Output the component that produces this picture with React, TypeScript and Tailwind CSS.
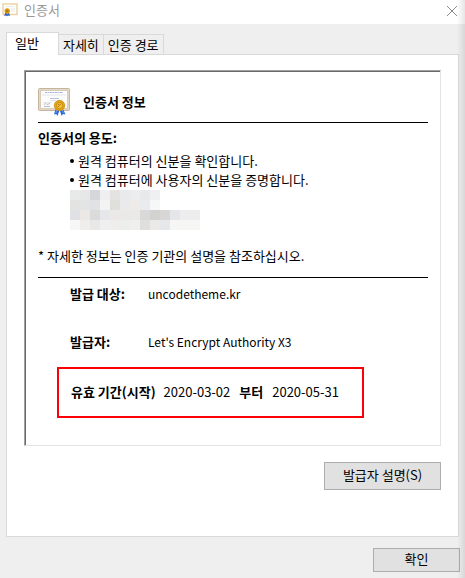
import React, { useState } from 'react';

const tabs = ['일반', '자세히', '인증 경로'];

const purposes = [
  '원격 컴퓨터의 신분을 확인합니다.',
  '원격 컴퓨터에 사용자의 신분을 증명합니다.',
];

// Colours of the pixelated block, one row per line
const mosaic = [
  ['#e8eaea', '#e7e7e7', '#d6d7da', '#efefef', '#e4e3e1', '#e9eaec', '#ededed', '#e8e9eb', '#f0f0f0'],
  ['#e3e3e1', '#e4e4e5', '#e0e2e5', '#f3f3f3', '#dfe0db', '#eaeaed', '#eeebe9', '#e9ebee', '#f7f7f7'],
  ['#dfe1e4', '#ebe8e6', '#dbdbdc', '#e5e7ea', '#eae9e8', '#eae9e8', '#eae9e8', '#d9d9d9', '#d2d2d1', '#d8d7d5', '#e4e6e9', '#ededed', '#ededed'],
  ['#f7f7f8', '#efeeed', '#e8e8e8', '#efefef', '#efeeec', '#eceeee', '#efefee', '#dfdfe0', '#ebeae8', '#e5e7eb', '#f6f6f5', '#f6f6f5', '#f6f6f5'],
];

const SmallCertificateIcon: React.FC = () => (
  <svg width="16" height="14" viewBox="0 0 16 14" aria-hidden="true">
    <rect x="1" y="1" width="14" height="10.5" fill="#fffdf8" stroke="#ecd0a0" strokeWidth="1.4" />
    <path d="M4 3.5h8M9 6h4M9 8h4" stroke="#e3e6ee" strokeWidth="0.8" />
    <path d="M3.6 8.5 2.2 13l1.9-.6 1 .8.6-4zM6.4 8.5 8.2 13l-1.8-.6-1 .8-.5-4z" fill="#2d62c4" />
    <circle cx="5.2" cy="8" r="2.7" fill="#dc9b16" />
    <circle cx="5.2" cy="8" r="1.3" fill="#b97608" />
  </svg>
);

const CertificateIcon: React.FC = () => (
  <svg width="32" height="28" viewBox="0 0 32 28" aria-hidden="true">
    <rect x="0.5" y="0.5" width="31" height="22" rx="1" fill="#d8cbb7" stroke="#c4b59e" />
    <rect x="1.5" y="1.5" width="29" height="20" fill="none" stroke="#efe7d9" strokeDasharray="1 1" />
    <rect x="3" y="3" width="26" height="17" fill="#fdfdfd" />
    <path d="M7 4.5h18" stroke="#a9b4dc" strokeDasharray="2 .5" />
    <path d="M4 7h24M5 14.5h9" stroke="#e3e5ea" />
    <path d="M12 10.5h9" stroke="#b4bfe2" />
    <path d="M12 12.5h6" stroke="#dce0ed" />
    <path d="M6 16.5l2-1 1 1 3-1M6 18.5h6" stroke="#9a9eb4" strokeWidth="0.7" fill="none" />
    <path d="M18 20l-2 6.5 2.3-.6 1.2 2 2-6z" fill="#2468db" />
    <path d="M24.5 20l3 6.5-2.6-.6-1.2 2-2-6z" fill="#2468db" />
    <path d="M18.8 22l-.9 3M24.2 22l1.2 3" stroke="#73a5f4" strokeWidth="0.9" />
    <circle cx="21.5" cy="17.5" r="5.2" fill="#e6a619" stroke="#cc8b12" strokeWidth="0.8" />
    <circle cx="21.5" cy="17.5" r="3.2" fill="#f5c43b" stroke="#bd810f" strokeWidth="0.8" />
    <path d="M20 19l3-3.2M19.8 17l1.6-1.2" stroke="#ad760d" strokeWidth="0.9" />
  </svg>
);

const Mosaic: React.FC = () => (
  <svg width="130" height="40" className="mt-px ml-8 block" shapeRendering="crispEdges" aria-hidden="true">
    {mosaic.map((row, y) =>
      row.map((fill, x) => (
        <rect key={`${x}-${y}`} x={x * 10} y={y * 10} width="10" height="10" fill={fill} />
      ))
    )}
  </svg>
);

const App: React.FC = () => {
  const [active, setActive] = useState(0);

  return (
    <div className="relative min-h-screen w-full bg-[#efefef] font-['Noto_Sans_CJK_KR',sans-serif] text-[13px] leading-[19px] text-black">
      {/* Title bar */}
      <header className="flex h-6 items-center justify-between bg-white pr-2 pl-[2px]">
        <div className="flex items-center gap-[6px] pb-1">
          <SmallCertificateIcon />
          <h1 className="pb-[2px] text-[#999999]">인증서</h1>
        </div>
        <button type="button" aria-label="닫기" className="pb-[2px]">
          <svg width="10" height="10" viewBox="0 0 10 10" stroke="#8c8c8c" strokeWidth="1">
            <path d="M0 0l10 10M10 0L0 10" />
          </svg>
        </button>
      </header>

      <main className="px-[6px] pt-2 pb-[6px]">
        {/* Tabs */}
        <div role="tablist" className="flex items-end">
          {tabs.map((tab, i) => (
            <button
              key={tab}
              type="button"
              role="tab"
              aria-selected={active === i}
              onClick={() => setActive(i)}
              className={
                active === i
                  ? 'relative -mb-px h-[23px] border border-b-0 border-[#d9d9d9] bg-white pr-[19px] pb-1 pl-2'
                  : 'h-5 border border-b-0 border-l-0 border-[#d9d9d9] px-1 pb-[2px]'
              }
            >
              {tab}
            </button>
          ))}
        </div>

        <section role="tabpanel" className="border border-[#d9d9d9] bg-white px-[17px] pt-[15px] pb-[46px]">
          <div className="border border-t-[#a0a0a0] border-r-[#e3e3e3] border-b-[#e3e3e3] border-l-[#a0a0a0]">
            <div className="border-t border-l border-[#696969] px-3 pt-4 pb-[27px]">
              <div className="flex items-center gap-[13px] border-b border-black pb-[6px]">
                <CertificateIcon />
                <h2 className="pb-[2px] font-bold">인증서 정보</h2>
              </div>

              <h3 className="mt-[5px] font-bold">인증서의 용도:</h3>
              <ul className="mt-1 pl-8">
                {purposes.map((purpose) => (
                  <li key={purpose} className="flex items-center gap-1">
                    <span className="size-1 rounded-full bg-black" />
                    {purpose}
                  </li>
                ))}
              </ul>
              <Mosaic />
              <p className="mt-4">* 자세한 정보는 인증 기관의 설명을 참조하십시오.</p>

              <dl className="mt-3 border-t border-black pt-[6px]">
                <div className="flex pl-8">
                  <dt className="w-[78px] font-bold">발급 대상:</dt>
                  <dd className="text-xs leading-[19px]">uncodetheme.kr</dd>
                </div>
                <div className="mt-[29px] flex pl-8">
                  <dt className="w-[78px] font-bold">발급자:</dt>
                  <dd className="text-xs leading-[19px]">Let's Encrypt Authority X3</dd>
                </div>
                <div className="mt-4 mr-16 ml-[19px] flex gap-2 border-2 border-[#fb0007] px-3 pt-[13px] pb-[15px]">
                  <dt className="font-bold">유효 기간(시작)</dt>
                  <dd className="flex gap-[9px]">
                    <span>2020-03-02</span>
                    <b>부터</b>
                    <span>2020-05-31</span>
                  </dd>
                </div>
              </dl>
            </div>
          </div>

          <div className="mt-4 flex justify-end">
            <button type="button" className="h-7 w-[117px] border border-[#adadad] bg-[#e1e1e1] pb-[3px]">
              발급자 설명(S)
            </button>
          </div>
        </section>
      </main>

      <footer className="flex justify-end px-[5px] pt-[5px] pb-[5px]">
        <button type="button" className="h-6 w-[87px] border border-[#adadad] bg-[#e1e1e1] pb-[3px]">
          확인
        </button>
      </footer>

      {/* Shade along the window edge */}
      <div className="pointer-events-none absolute inset-y-0 right-0 w-2 bg-linear-to-r from-transparent to-black/10" />
    </div>
  );
};

export default App;
